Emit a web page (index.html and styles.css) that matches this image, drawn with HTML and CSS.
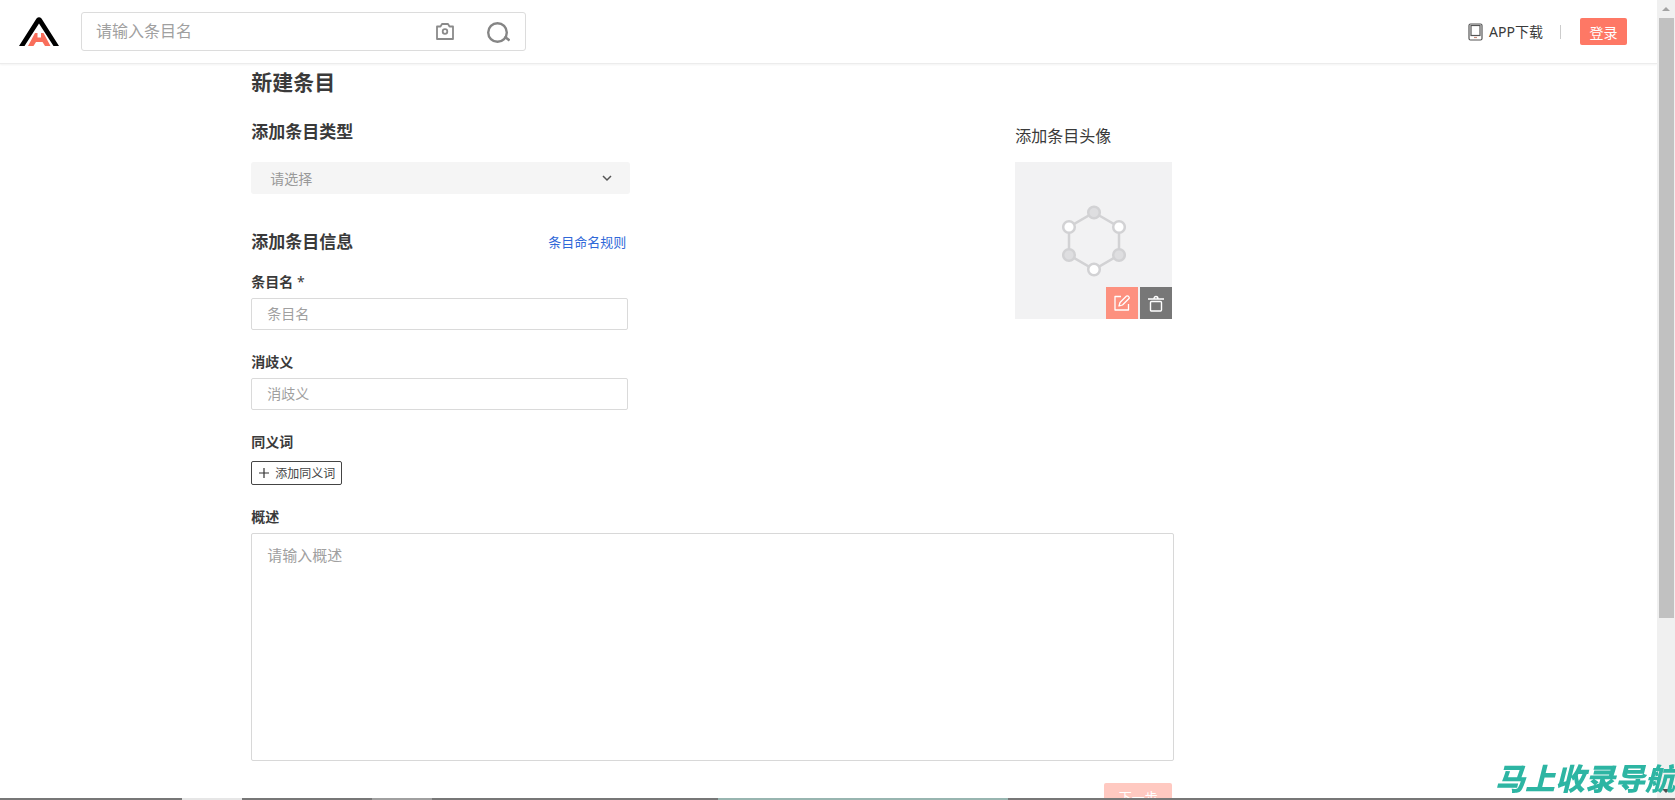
FILE: index.html
```html
<!DOCTYPE html>
<html lang="zh-CN">
<head>
<meta charset="utf-8">
<title>新建条目</title>
<link rel="stylesheet" href="styles.css">
</head>
<body>
<div class="viewport">
  <div class="page">
    <header class="header">
      <a class="logo" href="#" aria-label="首页">
        <svg width="40" height="30" viewBox="0 0 40 30">
          <path d="M0 29L17.500 1.500Q20 -1 22.500 1.500L40 29H34.500L20 6.500L5.500 29Z" fill="#000"/>
          <path d="M9 29L16 16H18.500V20.500H22V16H24.500L31.500 29H26L23.500 25H17L14.500 29Z" fill="#f96e5b"/>
        </svg>
      </a>
      <form class="search">
        <input class="search-input" type="text" placeholder="请输入条目名" aria-label="请输入条目名">
        <button class="icon-button" type="button" aria-label="图片搜索">
          <svg width="18" height="17" viewBox="0 0 18 17" fill="none" stroke="#8a8a8a" stroke-width="1.800" stroke-linejoin="round">
            <path d="M1 3.500H4.500L6 1H12L13.500 3.500H17V16H1Z"/><circle cx="9" cy="8.500" r="2.300"/>
          </svg>
        </button>
        <button class="icon-button" type="button" aria-label="搜索">
          <svg width="24" height="23" viewBox="0 0 24 23" fill="none" stroke="#858585" stroke-width="2.400">
            <circle cx="11.500" cy="12.500" r="9.300"/><path d="M18.500 16.500L23.500 20.500"/>
          </svg>
        </button>
      </form>
      <div class="account">
        <a class="app-link" href="#">
          <svg width="15" height="18" viewBox="0 0 15 18" fill="none" stroke="#555" stroke-width="1.200">
            <rect x="1" y="1" width="13" height="16" rx="1.500"/><rect x="3" y="2.500" width="9" height="10"/><path d="M6 14.500H9" stroke="#c98f80"/>
          </svg>
          <span>APP下载</span>
        </a>
        <span class="divider"></span>
        <button class="login" type="button">登录</button>
      </div>
    </header>
    <main class="content">
      <h1 class="title">新建条目</h1>
      <div class="columns">
        <div class="form">
          <h2 class="section-title"><label for="kind">添加条目类型</label></h2>
          <div class="select-box">
            <select class="select" id="kind"><option>请选择</option></select>
            <svg class="chevron" width="10" height="8" viewBox="0 0 10 8" fill="none" stroke="#555" stroke-width="1.500"><path d="M1 2L5 6L9 2"/></svg>
          </div>
          <div class="section-row">
            <h2 class="section-title">添加条目信息</h2>
            <a class="rules" href="#">条目命名规则</a>
          </div>
          <div class="field">
            <label class="label" for="name">条目名 <span class="required">*</span></label>
            <input class="input" id="name" type="text" placeholder="条目名">
          </div>
          <div class="field">
            <label class="label" for="sense">消歧义</label>
            <input class="input" id="sense" type="text" placeholder="消歧义">
          </div>
          <div class="field field-synonym">
            <span class="label">同义词</span>
            <button class="add" type="button">
              <svg width="10" height="10" viewBox="0 0 10 10" stroke="#333" stroke-width="1.200"><path d="M0 5H10M5 0V10"/></svg>
              <span>添加同义词</span>
            </button>
          </div>
        </div>
        <section class="avatar">
          <h3 class="avatar-title">添加条目头像</h3>
          <div class="avatar-box">
            <svg class="hexagon" width="64" height="72" viewBox="0 0 64 72" stroke="#d2d2d4" stroke-width="2.500">
              <path d="M32 7.500L57 22V50L32 64.500L7 50V22Z" fill="none"/>
              <g fill="#fff"><circle cx="7" cy="22" r="5.800"/><circle cx="57" cy="22" r="5.800"/><circle cx="32" cy="64.500" r="5.800"/></g>
              <g fill="#dedee0"><circle cx="32" cy="7.500" r="5.800"/><circle cx="7" cy="50" r="5.800"/><circle cx="57" cy="50" r="5.800"/></g>
            </svg>
            <div class="avatar-actions">
              <button class="action edit" type="button" aria-label="编辑">
                <svg width="16" height="16" viewBox="0 0 16 16" fill="none" stroke="#fff" stroke-width="1.300" stroke-linejoin="round">
                  <path d="M7 1.500H1V15H14.500V9"/><path d="M5 11L6 7.500L12.500 1Q14 0.500 15 2Q15.500 3 15 3.500L8.500 10Z"/>
                </svg>
              </button>
              <button class="action delete" type="button" aria-label="删除">
                <svg width="16" height="17" viewBox="0 0 16 17" fill="none" stroke="#fff" stroke-width="1.400">
                  <path d="M0 4H16M6 4Q6 1.500 8 1.500Q10 1.500 10 4"/><rect x="2.500" y="6.500" width="11" height="9.500" rx="1"/>
                </svg>
              </button>
            </div>
          </div>
        </section>
      </div>
      <div class="field">
        <label class="label" for="summary">概述</label>
        <textarea class="textarea" id="summary" placeholder="请输入概述"></textarea>
      </div>
      <div class="footer"><button class="next" type="button" disabled>下一步</button></div>
    </main>
  </div>
  <div class="scrollbar" aria-hidden="true">
    <span class="arrow"></span>
    <span class="thumb"></span>
    <span class="arrow arrow-down"></span>
  </div>
</div>
<div class="watermark">马上收录导航</div>
<div class="edge"><span class="edge-light"></span><span class="edge-grey"></span><span class="edge-teal"></span></div>
</body>
</html>
```
FILE: styles.css
```css
* { box-sizing: border-box; }
body {
  margin: 0;
  background: #fff;
  color: #3a3a3a;
  font-family: "Noto Sans", "Noto Sans CJK SC", sans-serif;
  font-size: 14px;
  overflow: hidden;
}
button, input, select, textarea { font-family: inherit; margin: 0; }
svg { display: block; flex: none; }
a { text-decoration: none; color: inherit; }
.viewport { display: flex; height: 100vh; overflow: hidden; }
.page { flex: 1; min-width: 0; }
.header {
  display: flex;
  align-items: center;
  height: 64px;
  padding: 0 30px 0 19px;
  border-bottom: 1px solid #ececec;
  box-shadow: 0 1px 2px #f3f3f3;
}
.search {
  display: flex;
  align-items: center;
  width: 445px;
  height: 39px;
  margin-left: 22px;
  padding-right: 15px;
  border: 1px solid #dcdcdc;
  border-radius: 3px;
}
.search-input {
  flex: 1;
  min-width: 0;
  height: 36px;
  padding: 0 14px 2px;
  border: 0;
  outline: 0;
  background: none;
  font-size: 16px;
}
::placeholder { color: #a0a0a0; opacity: 1; }
.icon-button { padding: 0; border: 0; background: none; margin-left: 32px; }
.account { display: flex; align-items: center; margin-left: auto; }
.app-link { display: flex; align-items: center; gap: 6px; line-height: 20px; }
.divider { width: 1px; height: 14px; margin: 0 19px 0 17px; background: #ccc; }
.login {
  width: 47px;
  height: 27px;
  padding: 0;
  border: 0;
  border-radius: 2px;
  background: #fe7865;
  color: #fff;
  font-size: 14px;
}
.content { width: 923px; max-width: 80%; margin-left: 15vw; padding-top: 4px; }
.title { margin: 0 0 24px; font-size: 21px; line-height: 28px; }
.columns { display: flex; justify-content: space-between; padding-right: 2px; }
.form { width: 379px; }
.section-title { margin: 0; font-size: 17px; line-height: 24px; }
.select-box { position: relative; margin: 18px 0 36px; }
.select {
  display: block;
  width: 100%;
  height: 32px;
  padding: 0 19px;
  appearance: none;
  border: 0;
  border-radius: 3px;
  background: #f5f5f5;
  color: #999;
  font-size: 14px;
}
.chevron { position: absolute; right: 18px; top: 12px; pointer-events: none; }
.section-row { display: flex; align-items: center; justify-content: space-between; padding-right: 4px; margin-bottom: 18px; }
.rules { color: #2f68d8; font-size: 13px; line-height: 20px; }
.field { display: flex; flex-direction: column; align-items: flex-start; gap: 6px; margin-bottom: 22px; }
.field-synonym { gap: 9px; }
.label { font-weight: 700; line-height: 20px; }
.required { font-weight: 400; }
.input {
  width: 377px;
  height: 32px;
  padding: 0 15px 2px;
  border: 1px solid #dadada;
  border-radius: 2px;
  font-size: 14px;
}
.add {
  display: flex;
  align-items: center;
  gap: 6px;
  height: 24px;
  padding: 0 6px 1px 7px;
  border: 1px solid #444;
  border-radius: 2px;
  background: #fff;
  color: #444;
  font-size: 12px;
}
.avatar-title { margin: 0 0 10px; font-size: 16px; font-weight: 400; line-height: 32px; }
.avatar-box {
  display: grid;
  place-items: center;
  position: relative;
  width: 157px;
  height: 157px;
  background: #f2f2f3;
}
.avatar-actions { position: absolute; right: 0; bottom: 0; display: flex; gap: 2px; }
.action { display: grid; place-items: center; width: 32px; height: 32px; padding: 0; border: 0; }
.edit { background: #fd917f; }
.delete { background: #777; }
.textarea {
  width: 100%;
  height: 228px;
  padding: 9px 15px;
  border: 1px solid #d8d8d8;
  border-radius: 2px;
  resize: none;
  font-size: 15px;
  line-height: 24px;
}
.footer { display: flex; justify-content: flex-end; padding-right: 2px; }
.next {
  width: 68px;
  height: 27px;
  padding: 0;
  border: 0;
  border-radius: 2px;
  background: #ffc9c1;
  color: #fff;
  font-size: 13px;
}
.scrollbar { display: flex; flex-direction: column; align-items: center; width: 18px; background: #f0f0f0; }
.arrow { height: 18px; display: flex; align-items: center; }
.arrow::before { content: ""; border: 4px solid transparent; border-top: 0; border-bottom-color: #a3a3a3; }
.arrow-down { margin-top: auto; }
.arrow-down::before { border: 4px solid transparent; border-bottom: 0; border-top-color: #505050; }
.thumb { width: 15px; height: 75%; background: #c1c1c1; }
.watermark {
  position: fixed;
  left: calc(100% - 180px);
  bottom: 5px;
  white-space: nowrap;
  color: #2db5a3;
  font-family: "Noto Sans CJK SC", sans-serif;
  font-size: 30px;
  font-style: italic;
  font-weight: 900;
  line-height: 36px;
}
.edge { position: fixed; left: 0; right: 0; bottom: 0; display: flex; height: 2px; background: #777; }
.edge-light { width: 60px; margin-left: 182px; background: #e6e6e6; }
.edge-grey { width: 60px; margin-left: 130px; background: #a0a0a0; }
.edge-teal { width: 290px; margin-left: 286px; background: #98b5b0; }
```
